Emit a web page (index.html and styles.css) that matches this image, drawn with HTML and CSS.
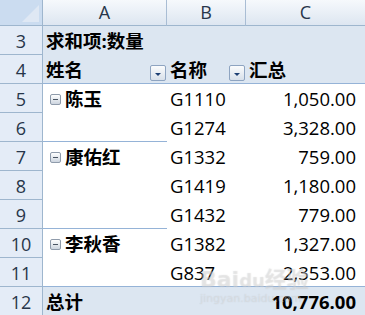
FILE: index.html
```html
<!DOCTYPE html>
<html>
<head>
<meta charset="utf-8">
<link rel="stylesheet" href="styles.css">
</head>
<body>
<div class="sheet">
  <div class="corner"><span class="tri"></span></div>
  <div class="colhead">A</div>
  <div class="colhead">B</div>
  <div class="colhead last">C</div>

  <div class="rowhead">3</div>
  <div class="cell band span3 bold">求和项:数量</div>

  <div class="rowhead">4</div>
  <div class="cell band line bold field"><span>姓名</span><span class="dd"></span></div>
  <div class="cell band line bold field"><span>名称</span><span class="dd"></span></div>
  <div class="cell band line bold">汇总</div>

  <div class="rowhead">5</div>
  <div class="cell name"><span class="minus"></span>陈玉</div>
  <div class="cell">G1110</div>
  <div class="cell num">1,050.00</div>

  <div class="rowhead">6</div>
  <div class="cell line"></div>
  <div class="cell">G1274</div>
  <div class="cell num">3,328.00</div>

  <div class="rowhead">7</div>
  <div class="cell name"><span class="minus"></span>康佑红</div>
  <div class="cell">G1332</div>
  <div class="cell num">759.00</div>

  <div class="rowhead">8</div>
  <div class="cell"></div>
  <div class="cell">G1419</div>
  <div class="cell num">1,180.00</div>

  <div class="rowhead">9</div>
  <div class="cell line"></div>
  <div class="cell">G1432</div>
  <div class="cell num">779.00</div>

  <div class="rowhead">10</div>
  <div class="cell name"><span class="minus"></span>李秋香</div>
  <div class="cell">G1382</div>
  <div class="cell num">1,327.00</div>

  <div class="rowhead">11</div>
  <div class="cell line"></div>
  <div class="cell line">G837</div>
  <div class="cell line num">2,353.00</div>

  <div class="rowhead">12</div>
  <div class="cell band bold">总计</div>
  <div class="cell band"></div>
  <div class="cell band num bold">10,776.00</div>
</div>
<div class="watermark">
  <div class="wm-main">Bai<span class="paw">du</span>经验</div>
  <div class="wm-sub">jingyan.baidu.com</div>
</div>
</body>
</html>
```

FILE: styles.css
```css
html, body {
  margin: 0;
  padding: 0;
  background: #ffffff;
  overflow: hidden;
}
body {
  width: 365px;
  height: 315px;
  position: relative;
  font-family: "Open Sans", "Noto Sans CJK SC", sans-serif;
}
.sheet {
  display: grid;
  grid-template-columns: 43px 124px 79px 119px;
  grid-template-rows: 26px;
  grid-auto-rows: 29px;
  font-size: 18.5px;
  color: #000;
}
.sheet > div {
  box-sizing: border-box;
  overflow: hidden;
  white-space: nowrap;
}
.corner {
  background: #cbdcf0;
  border-right: 1px solid #9eb6ce;
  border-bottom: 1px solid #9eb6ce;
  position: relative;
}
.tri {
  position: absolute;
  right: 3px;
  bottom: 3px;
  width: 0;
  height: 0;
  border-left: 17px solid transparent;
  border-bottom: 17px solid #dfe8f4;
}
.colhead {
  background: linear-gradient(#f6f9fc, #dde6f1);
  border-right: 1px solid #a9bdd4;
  border-bottom: 1px solid #9eb6ce;
  text-align: center;
  font-size: 18px;
  line-height: 24px;
  color: #27364a;
}
.colhead.last {
  border-right: none;
}
.rowhead {
  background: #e4ecf7;
  border-right: 1px solid #9eb6ce;
  border-bottom: 1px solid #9eb6ce;
  text-align: center;
  font-size: 18px;
  line-height: 30px;
  color: #27364a;
}
.cell {
  padding: 0 3px;
  line-height: 28px;
  padding-top: 1px;
}
.band {
  background: #dce6f1;
}
.line {
  border-bottom: 1px solid #95b3d7;
}
.span3 {
  grid-column: span 3;
}
.bold {
  font-weight: 700;
}
.num {
  text-align: right;
  padding-right: 9px;
}
.field {
  display: flex;
  justify-content: space-between;
  align-items: flex-end;
  padding-right: 1px;
  padding-bottom: 1px;
}
.field span:first-child {
  line-height: 28px;
  align-self: flex-start;
}
.dd {
  width: 16px;
  height: 16px;
  box-sizing: border-box;
  border: 1px solid #8ea4c1;
  border-radius: 2px;
  background: linear-gradient(#fbfcfd, #d8e0ea);
  position: relative;
  margin-bottom: 1px;
}
.dd::after {
  content: "";
  position: absolute;
  left: 4px;
  top: 7px;
  border-left: 3px solid transparent;
  border-right: 3px solid transparent;
  border-top: 3px solid #1d3f73;
}
.name {
  padding-left: 7px;
  font-weight: 700;
  display: flex;
  align-items: center;
}
.minus {
  width: 11px;
  height: 11px;
  box-sizing: border-box;
  border: 1px solid #8f9bab;
  border-radius: 2px;
  background: linear-gradient(#ffffff, #cdd5df);
  position: relative;
  margin-right: 4px;
  margin-top: 1px;
}
.minus::after {
  content: "";
  position: absolute;
  left: 2px;
  top: 4px;
  width: 5px;
  height: 1px;
  background: #4a5563;
}
.watermark {
  position: absolute;
  left: 200px;
  top: 268px;
  color: rgba(255, 255, 255, 0.25);
  pointer-events: none;
  text-shadow: 0 0 1px rgba(150, 150, 150, 0.35);
}
.wm-main {
  font-family: "DejaVu Sans", "Noto Sans CJK SC", sans-serif;
  font-weight: 700;
  font-size: 22px;
  line-height: 24px;
}
.paw {
  font-size: 18px;
}
.wm-sub {
  font-family: "DejaVu Sans", sans-serif;
  font-size: 11px;
  line-height: 12px;
}
```
